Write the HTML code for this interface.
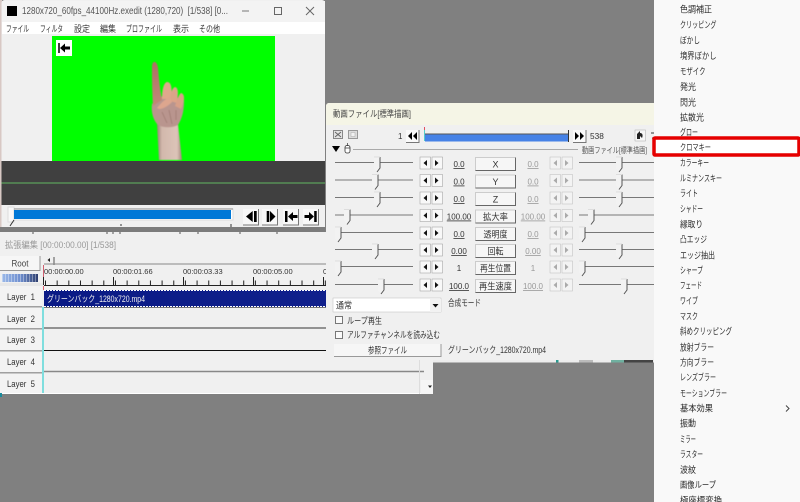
<!DOCTYPE html>
<html lang="ja"><head><meta charset="utf-8"><title>AviUtl</title>
<style>
html,body{margin:0;padding:0;background:#808080;width:800px;height:502px;overflow:hidden}
svg{display:block;position:absolute;left:0;top:0;filter:blur(.25px)}
text{font-family:"Liberation Sans","Noto Sans CJK JP",sans-serif;fill:#333;font-size:9px;white-space:pre}
.g{fill:#999}
.m text{font-size:9px;fill:#2c2c2c}
.v{text-anchor:middle;text-decoration:underline;font-size:8px}
.c{text-anchor:middle;font-size:9px}
</style></head><body>
<svg width="800" height="502" viewBox="0 0 800 502" xmlns="http://www.w3.org/2000/svg">
<defs>
<g id="b"><rect x="0" y="0" width="16" height="16.500" fill="#f8f8f8"/><path d="M15.500 0V16H0" fill="none" stroke="#777"/></g>
<g id="arr"><rect x="0" y="-7" width="10.500" height="12" fill="#f8f8f8" stroke="#999" stroke-width=".5"/><rect x="12" y="-7" width="10.500" height="12" fill="#f8f8f8" stroke="#999" stroke-width=".5"/><path d="M7-4V2L3.500-1Z M15-4V2L18.500-1Z" fill="#111"/></g>
<g id="arg"><rect x="0" y="-7" width="10.500" height="12" fill="#f3f3f3" stroke="#bbb" stroke-width=".5"/><rect x="12" y="-7" width="10.500" height="12" fill="#f3f3f3" stroke="#bbb" stroke-width=".5"/><path d="M7-4V2L3.500-1Z M15-4V2L18.500-1Z" fill="#aaa"/></g>
<g id="th"><path d="M-3-7H3V4L0 8-3 4Z" fill="#f2f2f2"/><path d="M3-7V4L0 8" fill="none" stroke="#555"/><path d="M-3-7H3" stroke="#ddd"/></g>
<g id="btn"><rect x="0" y="-7" width="41" height="14" fill="#f6f6f6"/><path d="M0.500 7V-6.500H40.500" fill="none" stroke="#ccc"/><path d="M40.500-6.500V6.500H.5" fill="none" stroke="#666"/></g>
<linearGradient id="clip" x1="0" x2="1"><stop offset="0" stop-color="#0a1a85"/><stop offset="1" stop-color="#10208c"/></linearGradient>
<linearGradient id="arm" x1="0" x2="1" y1="0" y2="0"><stop offset="0" stop-color="#9a8078"/><stop offset=".2" stop-color="#d2b8ac"/><stop offset=".8" stop-color="#dcc4b8"/><stop offset="1" stop-color="#a08478"/></linearGradient>
<linearGradient id="fg" x1="0" x2="0" y1="0" y2="1"><stop offset="0" stop-color="#b06e64"/><stop offset="1" stop-color="#c08a78"/></linearGradient>
<linearGradient id="stp" x1="0" x2="1"><stop offset="0" stop-color="#9ab8e8"/><stop offset=".5" stop-color="#7090d0"/><stop offset="1" stop-color="#304070"/></linearGradient>
<filter id="bl"><feGaussianBlur stdDeviation=".4"/></filter>
</defs>

<rect width="800" height="502" fill="#808080"/>

<!-- main window -->
<rect x="0" y="0" width="2" height="232" fill="#d8c8c4"/>
<rect x="1.500" y="0" width="323.500" height="228" rx="3" fill="#f0f0f0"/>
<rect x="2" y="1" width="323" height="21" fill="#f3f3f3"/>
<rect x="7" y="6" width="10" height="10" fill="#000"/>
<text x="22" y="14" textLength="206" lengthAdjust="spacingAndGlyphs" style="font-size:10px;fill:#555">1280x720_60fps_44100Hz.exedit (1280,720)  [1/538] [0...</text>
<path d="M242 11H249" stroke="#777"/>
<rect x="274.500" y="7.500" width="7" height="7" fill="none" stroke="#666"/>
<path d="M306 7L314 15M314 7L306 15" stroke="#666"/>
<rect x="2" y="22" width="323" height="12" fill="#fff"/>
<text x="6" y="32" textLength="23" lengthAdjust="spacingAndGlyphs">ファイル</text><text x="40" y="32" textLength="23" lengthAdjust="spacingAndGlyphs">フィルタ</text><text x="74" y="32" textLength="16" lengthAdjust="spacingAndGlyphs">設定</text><text x="100" y="32" textLength="16" lengthAdjust="spacingAndGlyphs">編集</text><text x="126" y="32" textLength="36" lengthAdjust="spacingAndGlyphs">プロファイル</text><text x="173" y="32" textLength="16" lengthAdjust="spacingAndGlyphs">表示</text><text x="199" y="32" textLength="21" lengthAdjust="spacingAndGlyphs">その他</text>
<rect x="52" y="36" width="223" height="125" fill="#00ff00"/>
<rect x="56" y="40" width="16" height="16" fill="#fff"/>
<path d="M59 43V53" stroke="#000" stroke-width="1.500"/><path d="M60 48L65 43.500V46.500H70V49.500H65V52.500Z" fill="#000"/>

<!-- hand -->
<g filter="url(#bl)">
<path d="M157 124L159 160H182L178 124Z" fill="url(#arm)"/>
<path d="M152 104C151 112 153 120 158 125 164 128 172 128 178 125 182 118 184 112 184 100L165 94Z" fill="#b9958e"/>
<path d="M153 106C152 90 152 76 152 67 152 60 157 60 158 68 159 80 160 90 162 100Z" fill="url(#fg)"/>
<path d="M162 99C162 92 163 83 167 82 172 82 172 90 171 99Z" fill="#dfa88c"/>
<path d="M170 101C170 95 172 88 175 87 179 88 178 95 177 103Z" fill="#dba488"/>
<path d="M175 106C177 100 179 94 181 93 185 94 185 100 181 109Z" fill="#d8a088"/>
<path d="M157 108C161 103 165 99 170 97L172 102C168 106 163 109 159 109Z" fill="#dda68e"/>
<path d="M162 112L167 123M169 110L172 124M176 110L176 120" stroke="#9c7870" stroke-width=".7" fill="none"/>
</g>

<!-- dark band -->
<rect x="1.500" y="161" width="323.500" height="44" fill="#404040"/>
<path d="M1.500 183H325" stroke="#62b862"/>
<rect x="1.500" y="205" width="323.500" height="23" fill="#f0f0f0"/>
<rect x="8" y="207" width="6" height="15" fill="#f8f8f8" stroke="#ddd"/>
<rect x="14" y="209" width="219" height="11" fill="#fff" stroke="#ddd"/>
<rect x="14" y="210" width="217" height="9" fill="#0078d7"/>
<path d="M14 209H233" stroke="#888"/>
<path d="M14 220L10 226M121 224V226M231 224V228" stroke="#333"/>
<use href="#b" x="243" y="209"/><use href="#b" x="262" y="209"/><use href="#b" x="283" y="209"/><use href="#b" x="303" y="209"/>
<path d="M254 211H256.700V222H254Z M252.700 211V222L246 216.500Z" fill="#000"/>
<path d="M266.700 211H269.300V222H266.700Z M270 211V222L275.500 216.500Z" fill="#000"/>
<path d="M285 211H287.500V222H285Z M288 216.500L293 212V215H297.500V218H293V221Z" fill="#000"/>
<path d="M314.200 211H316.700V222H314.200Z M314 216.500L309 212V215H304.500V218H309V221Z" fill="#000"/>

<!-- timeline panel -->
<rect x="0" y="232" width="433" height="162" fill="#f0f0f0"/>
<rect x="0" y="227" width="325" height="5" fill="#7c7c7c"/>
<path d="M33 232V234M107 232V234M113 232V234M120 232V234M180 232V234M198 232V234M240 232V234M277 232V234" stroke="#555"/>
<text x="5" y="248" textLength="111" lengthAdjust="spacingAndGlyphs" style="fill:#999;font-size:9px">拡張編集 [00:00:00.00] [1/538]</text>
<rect x="0" y="256" width="40" height="14.500" fill="#f6f6f6"/>
<path d="M40 256V270.500H0" fill="none" stroke="#999"/>
<text x="20" y="266.500" class="c" textLength="17" lengthAdjust="spacingAndGlyphs" style="font-size:9px;fill:#444">Root</text>
<rect x="2" y="274" width="36" height="8" fill="url(#stp)"/>
<path d="M2 278H38" stroke="#fff" stroke-width="8" stroke-dasharray="1 2" opacity=".35"/>
<rect x="0" y="283" width="43" height="3" fill="#e8e8e8"/>
<path d="M50 258V262L47.500 260Z" fill="#222"/>
<path d="M54 257V265" stroke="#555"/>
<path d="M44 264H326" stroke="#888"/>
<path d="M43.500 265V277" stroke="#d06070"/><path d="M43.500 277V285" stroke="#7fe0e0"/><path d="M43.500 286V290" stroke="#e06070"/>
<text x="44" y="274" style="font-size:7.500px">00:00:00.00</text><text x="113" y="274" style="font-size:7.500px">00:00:01.66</text><text x="183" y="274" style="font-size:7.500px">00:00:03.33</text><text x="253" y="274" style="font-size:7.500px">00:00:05.00</text><text x="323" y="274" style="font-size:7.500px">0</text>
<path d="M44 285.500H326" stroke="#222"/>
<path d="M45 283H326" stroke="#222" stroke-width="5" stroke-dasharray="1 10.660"/>
<path d="M43 281H326" stroke="#222" stroke-width="8" stroke-dasharray="1 69" stroke-dashoffset="-70"/>

<rect x="0" y="286" width="42" height="20" fill="#f3f3f3"/><path d="M0 306.800H42" stroke="#a0a0a0" stroke-width="1.500"/>
<rect x="0" y="308" width="42" height="20" fill="#f3f3f3"/><path d="M0 328.800H42" stroke="#a0a0a0" stroke-width="1.500"/>
<rect x="0" y="330" width="42" height="20" fill="#f3f3f3"/><path d="M0 350.800H42" stroke="#a0a0a0" stroke-width="1.500"/>
<rect x="0" y="352" width="42" height="20" fill="#f3f3f3"/><path d="M0 372.800H42" stroke="#a0a0a0" stroke-width="1.500"/>
<rect x="0" y="374" width="42" height="19" fill="#f3f3f3"/>
<text x="7" y="300" textLength="28" lengthAdjust="spacingAndGlyphs">Layer  1</text><text x="7" y="322" textLength="28" lengthAdjust="spacingAndGlyphs">Layer  2</text><text x="7" y="343" textLength="28" lengthAdjust="spacingAndGlyphs">Layer  3</text><text x="7" y="365" textLength="28" lengthAdjust="spacingAndGlyphs">Layer  4</text><text x="7" y="387" textLength="28" lengthAdjust="spacingAndGlyphs">Layer  5</text>
<rect x="42" y="307" width="2" height="86" fill="#7fdede"/>
<rect x="44" y="290" width="282" height="17" fill="url(#clip)"/>
<path d="M44 290.500H326M44 306.500H326" stroke="#fff" stroke-dasharray="2 1"/>
<text x="47" y="302" textLength="98" lengthAdjust="spacingAndGlyphs" style="fill:#f0f0f0">グリーンバック_1280x720.mp4</text>
<path d="M44 307.500H326" stroke="#777"/>
<path d="M44 328H424" stroke="#333"/><path d="M44 350.500H424" stroke="#111"/><path d="M44 371.500H424" stroke="#888" stroke-width="1.500"/>
<path d="M0 393.500H433" stroke="#fff"/>
<rect x="0" y="393" width="2" height="4" fill="#1a8a9a"/>
<path d="M419.500 360V394" stroke="#ddd"/>
<rect x="421" y="380" width="12" height="14" fill="#f6f6f6"/>
<path d="M428 385.500H432L430 388Z" fill="#222"/>
<rect x="433" y="360" width="221" height="142" fill="#808080"/>

<!-- strip under dialog -->
<rect x="433" y="359" width="221" height="3.500" fill="#ececec"/>
<rect x="556" y="359" width="2.500" height="3.500" fill="#2a9a90"/>
<rect x="579" y="359" width="14" height="3.500" fill="#bbb"/>
<rect x="611" y="359" width="13" height="3.500" fill="#6fb0a0"/>
<rect x="624" y="360" width="29" height="2.500" fill="#444"/>

<!-- dialog -->
<rect x="326" y="103" width="329" height="257" rx="3" fill="#f0f0f0"/>
<path d="M326 106a3 3 0 0 1 3-3H655V125H326Z" fill="#f5f5e6"/>
<text x="333" y="117" textLength="78" lengthAdjust="spacingAndGlyphs" style="fill:#444">動画ファイル[標準描画]</text>
<rect x="333.500" y="130.500" width="9" height="8" fill="#e4e4e4" stroke="#888"/><path d="M335 132L341 137M341 132L335 137" stroke="#666"/>
<rect x="348.500" y="130.500" width="9" height="8" fill="#ddd" stroke="#999"/><rect x="351" y="132.500" width="4" height="4" fill="#f2f2f2" stroke="#aaa" stroke-width=".5"/>
<text x="398" y="139" style="font-size:8px">1</text>
<rect x="406" y="130" width="13" height="12.500" fill="#fafafa"/><path d="M419 130V142.500H406" fill="none" stroke="#777"/>
<path d="M412 132V140L408 136Z M417 132V140L413 136Z" fill="#000"/>
<rect x="425" y="134" width="143" height="7.500" fill="#4682e6"/>
<path d="M425 134H568" stroke="#555"/>
<path d="M424.500 127V141" stroke="#aaa"/><path d="M424.500 127V130" stroke="#e05060"/><path d="M424.500 130V141" stroke="#5cc"/><path d="M568.500 130V142" stroke="#333"/>
<rect x="573" y="130" width="13" height="12.500" fill="#fafafa"/><path d="M586 130V142.500H573" fill="none" stroke="#777"/>
<path d="M575 132V140L579 136Z M580 132V140L584 136Z" fill="#000"/>
<text x="590" y="139" style="font-size:8.300px">538</text>
<rect x="635" y="130" width="10.500" height="11" fill="#f6f6f6" stroke="#aaa" stroke-width=".5"/><path d="M637 134L640 131V133C643 133 643 136 642 138L640 136V139H637Z" fill="#222"/>
<path d="M651 133H654M652 138H654" stroke="#333"/>
<path d="M332 146H340L336 152Z" fill="#000"/>
<rect x="345" y="145.500" width="5" height="7.500" rx="2" fill="#fff" stroke="#333" stroke-width=".8"/><path d="M347.500 143V146M345 148H350" stroke="#333" stroke-width=".7"/>
<path d="M353 149.500H578" stroke="#aaa"/>
<text x="582" y="153" textLength="65" lengthAdjust="spacingAndGlyphs" style="font-size:8px;fill:#555">動画ファイル[標準描画]</text>

<!-- rows -->
<g stroke="#777"><path d="M335 162.500H413M335 180H413M335 197.500H413M335 215H413M335 232.500H413M335 249.500H413M335 266.500H413M335 284.500H413"/>
<path d="M579 162.500H654M579 180H654M579 197.500H654M579 215H654M579 232.500H654M579 249.500H654M579 266.500H654M579 284.500H654"/></g>
<use href="#th" x="377" y="164"/><use href="#th" x="375" y="181.500"/><use href="#th" x="377" y="199"/><use href="#th" x="347" y="216.500"/><use href="#th" x="338" y="234"/><use href="#th" x="375" y="251"/><use href="#th" x="338" y="268"/><use href="#th" x="381" y="286"/>
<use href="#th" x="619" y="164"/><use href="#th" x="619" y="181.500"/><use href="#th" x="619" y="199"/><use href="#th" x="591" y="216.500"/><use href="#th" x="582" y="234"/><use href="#th" x="619" y="251"/><use href="#th" x="582" y="268"/><use href="#th" x="624" y="286"/>
<use href="#arr" x="420" y="164"/><use href="#arr" x="420" y="181.500"/><use href="#arr" x="420" y="199"/><use href="#arr" x="420" y="216.500"/><use href="#arr" x="420" y="234"/><use href="#arr" x="420" y="251"/><use href="#arr" x="420" y="268"/><use href="#arr" x="420" y="286"/>
<use href="#arg" x="550" y="164"/><use href="#arg" x="550" y="181.500"/><use href="#arg" x="550" y="199"/><use href="#arg" x="550" y="216.500"/><use href="#arg" x="550" y="234"/><use href="#arg" x="550" y="251"/><use href="#arg" x="550" y="268"/><use href="#arg" x="550" y="286"/>
<use href="#btn" x="475" y="164"/><use href="#btn" x="475" y="181.500"/><use href="#btn" x="475" y="199"/><use href="#btn" x="475" y="216.500"/><use href="#btn" x="475" y="234"/><use href="#btn" x="475" y="251"/><use href="#btn" x="475" y="268"/><use href="#btn" x="475" y="286"/>
<text x="495.500" y="167.500" class="c">X</text><text x="495.500" y="185" class="c">Y</text><text x="495.500" y="202.500" class="c">Z</text>
<text x="495.500" y="220" class="c" textLength="25" lengthAdjust="spacingAndGlyphs">拡大率</text><text x="495.500" y="237.500" class="c" textLength="24" lengthAdjust="spacingAndGlyphs">透明度</text><text x="495.500" y="254.500" class="c" textLength="16" lengthAdjust="spacingAndGlyphs">回転</text><text x="495.500" y="271.500" class="c" textLength="31" lengthAdjust="spacingAndGlyphs">再生位置</text><text x="495.500" y="289.500" class="c" textLength="33" lengthAdjust="spacingAndGlyphs">再生速度</text>
<text x="459" y="167" class="v">0.0</text><text x="459" y="184.500" class="v">0.0</text><text x="459" y="202" class="v">0.0</text><text x="459" y="219.500" class="v">100.00</text><text x="459" y="237" class="v">0.0</text><text x="459" y="254" class="v">0.00</text><text x="459" y="271" class="v" style="text-decoration:none">1</text><text x="459" y="289" class="v">100.0</text>
<text x="533" y="167" class="v g">0.0</text><text x="533" y="184.500" class="v g">0.0</text><text x="533" y="202" class="v g">0.0</text><text x="533" y="219.500" class="v g">100.00</text><text x="533" y="237" class="v g">0.0</text><text x="533" y="254" class="v g">0.00</text><text x="533" y="271" class="v g" style="text-decoration:none">1</text><text x="533" y="289" class="v g">100.0</text>

<!-- lower controls -->
<rect x="333" y="298" width="108" height="14" fill="#fff" stroke="#bbb" stroke-width=".5"/>
<rect x="430" y="299" width="11" height="13" fill="#f2f2f2"/>
<path d="M432.500 304H438.500L435.500 307.500Z" fill="#111"/>
<text x="336" y="308.500" textLength="16" lengthAdjust="spacingAndGlyphs">通常</text>
<text x="448" y="306" textLength="33" lengthAdjust="spacingAndGlyphs">合成モード</text>
<rect x="335.500" y="316.500" width="7" height="7" fill="#fafafa" stroke="#777"/>
<text x="347" y="324" textLength="35" lengthAdjust="spacingAndGlyphs">ループ再生</text>
<rect x="335.500" y="331.500" width="7" height="7" fill="#fafafa" stroke="#777"/>
<text x="347" y="338" textLength="93" lengthAdjust="spacingAndGlyphs">アルファチャンネルを読み込む</text>
<rect x="334" y="344" width="107" height="12.500" fill="#f6f6f6"/><path d="M441 344V356.500H334" fill="none" stroke="#999"/>
<text x="387.500" y="353.500" class="c" textLength="39" lengthAdjust="spacingAndGlyphs">参照ファイル</text>
<text x="448" y="353" textLength="98" lengthAdjust="spacingAndGlyphs">グリーンバック_1280x720.mp4</text>

<!-- context menu -->
<rect x="654" y="0" width="146" height="502" fill="#f9f9f9"/>
<rect x="656" y="140" width="141" height="13" fill="#fff"/>
<rect x="654" y="138" width="145" height="17" fill="none" stroke="#e60000" stroke-width="3.500" rx="1"/>
<g class="m">
<text x="680" y="12.500" textLength="32" lengthAdjust="spacingAndGlyphs">色調補正</text>
<text x="680" y="28" textLength="36.500" lengthAdjust="spacingAndGlyphs">クリッピング</text>
<text x="680" y="43.500" textLength="20" lengthAdjust="spacingAndGlyphs">ぼかし</text>
<text x="680" y="59" textLength="36.500" lengthAdjust="spacingAndGlyphs">境界ぼかし</text>
<text x="680" y="74.500" textLength="25.500" lengthAdjust="spacingAndGlyphs">モザイク</text>
<text x="680" y="90" textLength="16" lengthAdjust="spacingAndGlyphs">発光</text>
<text x="680" y="105.500" textLength="16" lengthAdjust="spacingAndGlyphs">閃光</text>
<text x="680" y="120.500" textLength="24" lengthAdjust="spacingAndGlyphs">拡散光</text>
<text x="680" y="135.500" textLength="18" lengthAdjust="spacingAndGlyphs">グロー</text>
<text x="680" y="150.500" textLength="31" lengthAdjust="spacingAndGlyphs">クロマキー</text>
<text x="680" y="166" textLength="29" lengthAdjust="spacingAndGlyphs">カラーキー</text>
<text x="680" y="181.500" textLength="42" lengthAdjust="spacingAndGlyphs">ルミナンスキー</text>
<text x="680" y="196.500" textLength="18" lengthAdjust="spacingAndGlyphs">ライト</text>
<text x="680" y="212" textLength="23" lengthAdjust="spacingAndGlyphs">シャドー</text>
<text x="680" y="227.500" textLength="23" lengthAdjust="spacingAndGlyphs">縁取り</text>
<text x="680" y="242.500" textLength="27" lengthAdjust="spacingAndGlyphs">凸エッジ</text>
<text x="680" y="258.500" textLength="35" lengthAdjust="spacingAndGlyphs">エッジ抽出</text>
<text x="680" y="273.500" textLength="23" lengthAdjust="spacingAndGlyphs">シャープ</text>
<text x="680" y="288.500" textLength="22" lengthAdjust="spacingAndGlyphs">フェード</text>
<text x="680" y="304" textLength="18" lengthAdjust="spacingAndGlyphs">ワイプ</text>
<text x="680" y="319.500" textLength="18" lengthAdjust="spacingAndGlyphs">マスク</text>
<text x="680" y="334.500" textLength="52" lengthAdjust="spacingAndGlyphs">斜めクリッピング</text>
<text x="680" y="350.500" textLength="34" lengthAdjust="spacingAndGlyphs">放射ブラー</text>
<text x="680" y="365.500" textLength="34" lengthAdjust="spacingAndGlyphs">方向ブラー</text>
<text x="680" y="380.500" textLength="36" lengthAdjust="spacingAndGlyphs">レンズブラー</text>
<text x="680" y="396.500" textLength="47" lengthAdjust="spacingAndGlyphs">モーションブラー</text>
<text x="680" y="411.500" textLength="33" lengthAdjust="spacingAndGlyphs">基本効果</text>
<text x="680" y="426.500" textLength="16" lengthAdjust="spacingAndGlyphs">振動</text>
<text x="680" y="442.500" textLength="16" lengthAdjust="spacingAndGlyphs">ミラー</text>
<text x="680" y="457.500" textLength="23" lengthAdjust="spacingAndGlyphs">ラスター</text>
<text x="680" y="473" textLength="16" lengthAdjust="spacingAndGlyphs">波紋</text>
<text x="680" y="488" textLength="36" lengthAdjust="spacingAndGlyphs">画像ループ</text>
<text x="680" y="503.500" textLength="42" lengthAdjust="spacingAndGlyphs">極座標変換</text>
</g>
<path d="M786 405.500L789 408.500L786 411.500" fill="none" stroke="#444"/>
</svg>
</body></html>
